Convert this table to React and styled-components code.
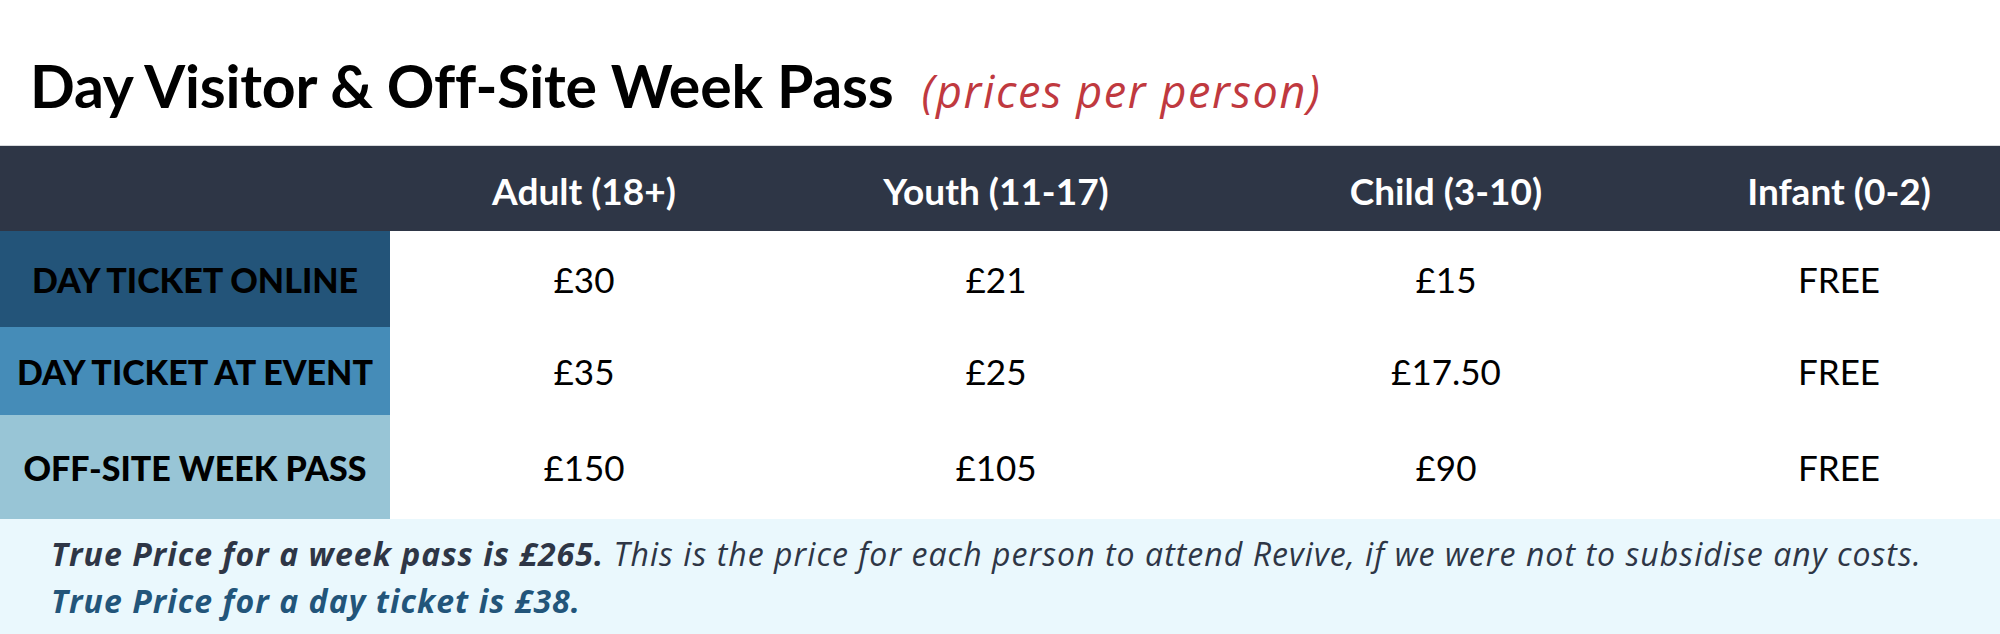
import React from "react";
import styled, { createGlobalStyle } from "styled-components";

const GlobalStyle = createGlobalStyle`
  html, body {
    margin: 0;
    padding: 0;
    background: #ffffff;
  }
  * { box-sizing: border-box; }
`;

const Page = styled.div`
  width: 2000px;
  height: 634px;
  display: flex;
  flex-direction: column;
  font-family: Lato, "Liberation Sans", sans-serif;
  color: #000;
  overflow: hidden;
`;

const TitleBar = styled.header`
  height: 146px;
  display: flex;
  align-items: baseline;
  gap: 28px;
  padding: 56px 0 0 30px;
  border-bottom: 1px solid #d8dadd;
`;

const Title = styled.h1`
  margin: 0;
  font-size: 59px;
  font-weight: 700;
  line-height: 1;
  letter-spacing: -0.2px;
`;

const Subtitle = styled.span`
  font-family: "Open Sans", Lato, sans-serif;
  font-size: 45px;
  font-style: italic;
  font-weight: 400;
  letter-spacing: 1.6px;
  color: #c0393f;
  line-height: 1;
`;

const Grid = styled.div`
  display: grid;
  grid-template-columns: 390px 388px 436px 464px 1fr;
  grid-template-rows: 85px 96px 88px 104px;
`;

const HeadCell = styled.div`
  background: #2e3646;
  color: #fff;
  font-size: 37px;
  font-weight: 700;
  display: flex;
  align-items: center;
  justify-content: center;
  padding-top: 3px;
`;

const RowLabel = styled.div`
  background: ${(p) => p.$bg};
  font-size: 34px;
  font-weight: 900;
  display: flex;
  align-items: center;
  justify-content: center;
  white-space: nowrap;
`;

const Cell = styled.div`
  background: #fff;
  font-size: 35px;
  font-weight: 400;
  display: flex;
  align-items: center;
  justify-content: center;
`;

const Note = styled.footer`
  flex: 1;
  background: #eaf8fd;
  padding: 11px 0 0 51px;
  font-family: "Open Sans", Lato, sans-serif;
  font-size: 32px;
  font-style: italic;
  letter-spacing: 1.05px;
  line-height: 47px;
  color: #2e3646;
`;

const Strong = styled.strong`
  font-weight: 700;
  color: ${(p) => p.$color || "inherit"};
`;

const Line = styled.p`
  margin: 0;
  white-space: nowrap;
`;

export default function App() {
  const heads = ["Adult (18+)", "Youth (11-17)", "Child (3-10)", "Infant (0-2)"];
  const rows = [
    { label: "DAY TICKET ONLINE", bg: "#235479", prices: ["£30", "£21", "£15", "FREE"] },
    { label: "DAY TICKET AT EVENT", bg: "#458cb8", prices: ["£35", "£25", "£17.50", "FREE"] },
    { label: "OFF-SITE WEEK PASS", bg: "#98c5d6", prices: ["£150", "£105", "£90", "FREE"] },
  ];

  return (
    <Page>
      <GlobalStyle />
      <TitleBar>
        <Title>Day Visitor &amp; Off-Site Week Pass</Title>
        <Subtitle>(prices per person)</Subtitle>
      </TitleBar>
      <Grid>
        <HeadCell />
        {heads.map((h) => (
          <HeadCell key={h}>{h}</HeadCell>
        ))}
        {rows.map((r) => (
          <React.Fragment key={r.label}>
            <RowLabel $bg={r.bg}>{r.label}</RowLabel>
            {r.prices.map((p, i) => (
              <Cell key={i}>{p}</Cell>
            ))}
          </React.Fragment>
        ))}
      </Grid>
      <Note>
        <Line>
          <Strong>True Price for a week pass is £265.</Strong> This is the price for each person to attend Revive, if we were not to subsidise any costs.
        </Line>
        <Line>
          <Strong $color="#22557a">True Price for a day ticket is £38.</Strong>
        </Line>
      </Note>
    </Page>
  );
}
